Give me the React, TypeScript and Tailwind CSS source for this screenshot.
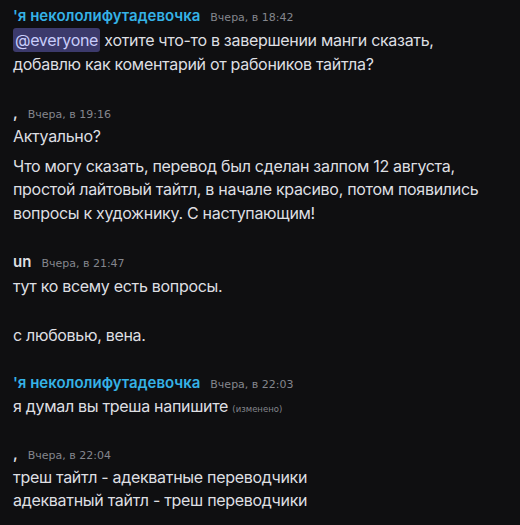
const font = { fontFamily: "Inter, 'Noto Sans', sans-serif" };
const small = { fontFamily: "'DejaVu Sans', 'Noto Sans', sans-serif" };

function Header({ name, nameColor, time }: { name: string; nameColor: string; time: string }) {
  return (
    <div className="flex items-baseline gap-[10px] h-[24px] leading-[24px]">
      <span className={`text-[15px] font-semibold tracking-normal ${nameColor}`}>{name}</span>
      <span className="text-[11px] leading-none text-[#84868d] tracking-normal" style={small}>
        {time}
      </span>
    </div>
  );
}

export default function App() {
  return (
    <div
      className="w-[520px] h-[525px] bg-[#0f0f11] text-[#dedfe2] overflow-hidden px-[13px] pt-[4px] text-[16px] tracking-[-0.3px]"
      style={font}
    >
      <div>
        <Header name="'я некололифутадевочка" nameColor="text-[#35b2e6]" time="Вчера, в 18:42" />
        <div className="leading-[25px]">
          <span className="bg-[#3c3a6c] text-[#c9cdfb] rounded-[3px] px-[2px] py-[2px]">@everyone</span> хотите что-то в
          завершении манги сказать,
        </div>
        <div className="leading-[22px]">добавлю как коментарий от рабоников тайтла?</div>
      </div>

      <div className="mt-[26px]">
        <Header name="," nameColor="text-[#dedfe2]" time="Вчера, в 19:16" />
        <div className="leading-[23.5px]">
          <p>Актуально?</p>
          <p className="mt-[6px]">
            Что могу сказать, перевод был сделан залпом 12 августа, простой лайтовый тайтл, в начале красиво, потом
            появились вопросы к художнику. С наступающим!
          </p>
        </div>
      </div>

      <div className="mt-[25px]">
        <Header name="un" nameColor="text-[#dedfe2]" time="Вчера, в 21:47" />
        <div className="leading-[24.5px]">
          <p>тут ко всему есть вопросы.</p>
          <p>&nbsp;</p>
          <p>с любовью, вена.</p>
        </div>
      </div>

      <div className="mt-[23px]">
        <Header name="'я некололифутадевочка" nameColor="text-[#35b2e6]" time="Вчера, в 22:03" />
        <div className="h-[23px] leading-[23px]">
          я думал вы треша напишите{" "}
          <span className="text-[8.5px] leading-none text-[#84868d] tracking-normal" style={small}>
            (изменено)
          </span>
        </div>
      </div>

      <div className="mt-[24px]">
        <Header name="," nameColor="text-[#dedfe2]" time="Вчера, в 22:04" />
        <div className="leading-[23px]">
          <p>треш тайтл - адекватные переводчики</p>
          <p>адекватный тайтл - треш переводчики</p>
        </div>
      </div>
    </div>
  );
}
